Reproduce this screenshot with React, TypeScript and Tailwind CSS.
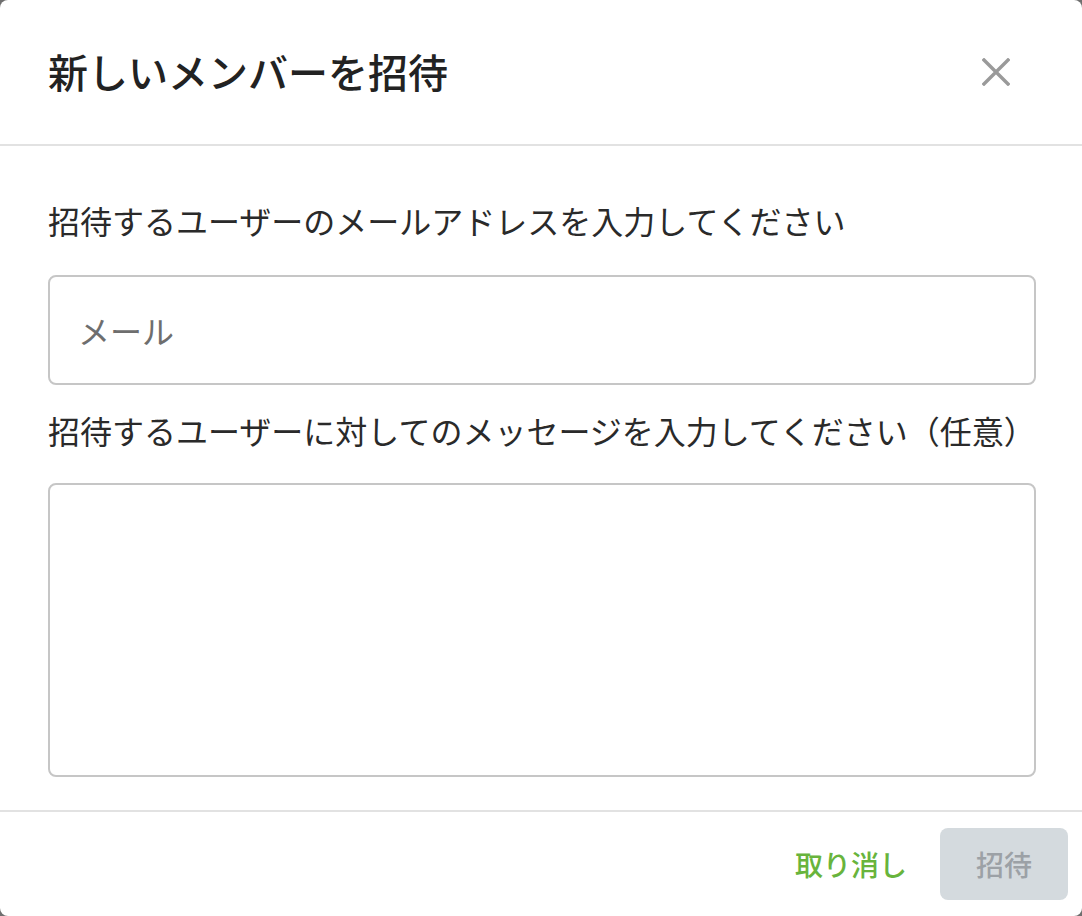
import React from 'react';

const InviteMemberModal: React.FC = () => {
  return (
    <div className="w-[1082px] h-[916px] bg-[#6f6f6f] font-['Noto_Sans_CJK_JP',sans-serif]">
      <div className="w-full h-full bg-white rounded-[8px] flex flex-col overflow-hidden">
        {/* Header */}
        <div className="h-[146px] shrink-0 flex items-center justify-between pl-[48px] pr-[72px] border-b-2 border-[#e2e2e2]">
          <h2 className="text-[40px] leading-[48px] font-medium text-[#222] pb-[2px]">新しいメンバーを招待</h2>
          <button className="w-[28px] h-[28px] flex items-center justify-center">
            <svg width="28" height="28" viewBox="0 0 28 28" fill="none">
              <path d="M2 2L26 26M26 2L2 26" stroke="#9a9a9a" strokeWidth="3.4" strokeLinecap="square" />
            </svg>
          </button>
        </div>

        {/* Body */}
        <div className="flex-1 flex flex-col pl-[48px] pr-[46px] pt-[50px] pb-[33px]">
          <label className="text-[32px] leading-[48px] text-[#2a2a2a]">
            招待するユーザーのメールアドレスを入力してください
          </label>
          <input
            type="email"
            placeholder="メール"
            className="mt-[31px] h-[110px] w-full rounded-[8px] border-2 border-[#c6c6c6] px-[28px] text-[32px] text-[#222] placeholder:text-[#6e6e6e] outline-none"
          />
          <label className="mt-[21px] text-[32px] leading-[48px] text-[#2a2a2a]">
            招待するユーザーに対してのメッセージを入力してください（任意）
          </label>
          <textarea className="mt-[29px] flex-1 w-full rounded-[8px] border-2 border-[#c6c6c6] px-[28px] py-[20px] text-[32px] resize-none outline-none" />
        </div>

        {/* Footer */}
        <div className="h-[106px] shrink-0 flex items-center justify-end gap-[33px] pr-[14px] border-t-2 border-[#e2e2e2]">
          <button className="text-[28px] font-medium text-[#68b43c]">取り消し</button>
          <button className="w-[128px] h-[72px] rounded-[8px] bg-[#d4dade] text-[28px] font-medium text-[#9ca1a6]">
            招待
          </button>
        </div>
      </div>
    </div>
  );
};

export default function App() {
  return <InviteMemberModal />;
}
